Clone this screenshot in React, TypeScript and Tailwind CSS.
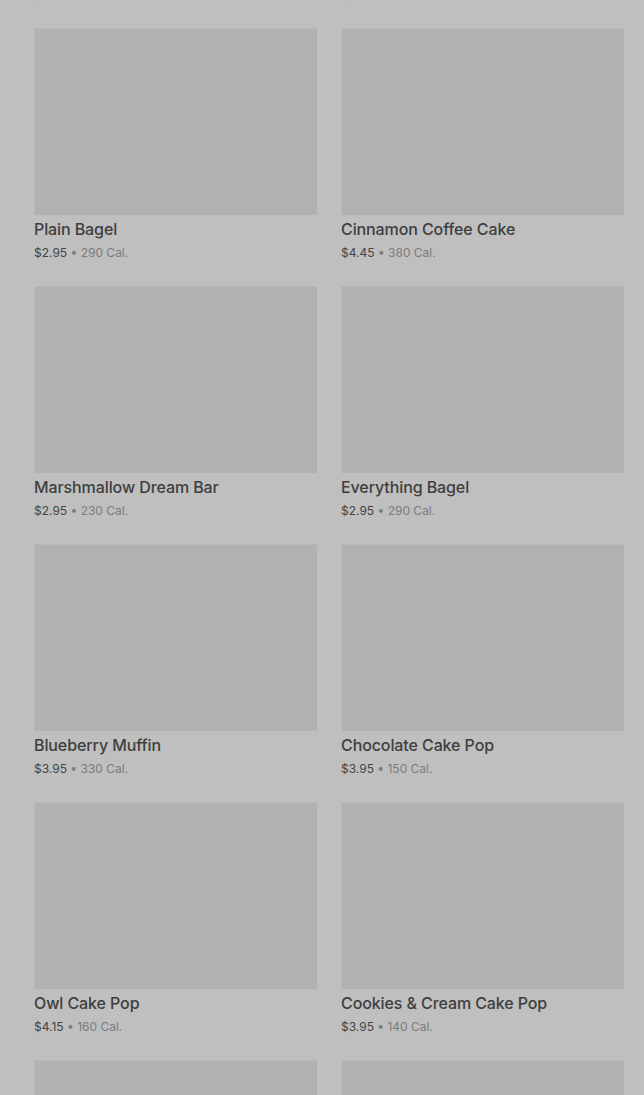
import * as React from "react";

// Menu grid, shown dimmed behind an overlay

interface MenuItem {
  name: string;
  price: string;
  calories: number;
}

const items: MenuItem[] = [
  { name: "Butter Croissant", price: "$3.45", calories: 260 },
  { name: "Banana Nut Bread", price: "$3.75", calories: 420 },
  { name: "Plain Bagel", price: "$2.95", calories: 290 },
  { name: "Cinnamon Coffee Cake", price: "$4.45", calories: 380 },
  { name: "Marshmallow Dream Bar", price: "$2.95", calories: 230 },
  { name: "Everything Bagel", price: "$2.95", calories: 290 },
  { name: "Blueberry Muffin", price: "$3.95", calories: 330 },
  { name: "Chocolate Cake Pop", price: "$3.95", calories: 150 },
  { name: "Owl Cake Pop", price: "$4.15", calories: 160 },
  { name: "Cookies & Cream Cake Pop", price: "$3.95", calories: 140 },
  { name: "Birthday Cake Pop", price: "$3.95", calories: 160 },
  { name: "Lemon Loaf", price: "$3.75", calories: 470 },
];

function ItemCard({ item }: { item: MenuItem }) {
  return (
    <div className="flex flex-col">
      <div className="h-[187px] w-full bg-[#b1b1b1] border-t border-l border-[#b8b8b8]" />
      <div className="mt-[3px] h-[22px] text-[16px] leading-[22px] font-medium text-[#3e3e3e] tracking-[-0.1px]">
        {item.name}
      </div>
      <div className="mt-[3px] h-[20px] text-[12px] leading-[20px] text-[#444444]">
        {item.price}
        <span className="text-[#7c7c7c]"> • {item.calories} Cal.</span>
      </div>
    </div>
  );
}

export default function App() {
  return (
    <div
      className="h-[1095px] w-full overflow-hidden bg-[#bfbfbf]"
      style={{ fontFamily: "Inter, Roboto, 'Noto Sans', Arial, sans-serif" }}
    >
      <div className="-mt-[230px] grid grid-cols-2 gap-x-6 gap-y-[23px] pl-[34px] pr-[20px]">
        {items.map((item) => (
          <ItemCard key={item.name} item={item} />
        ))}
      </div>
    </div>
  );
}
